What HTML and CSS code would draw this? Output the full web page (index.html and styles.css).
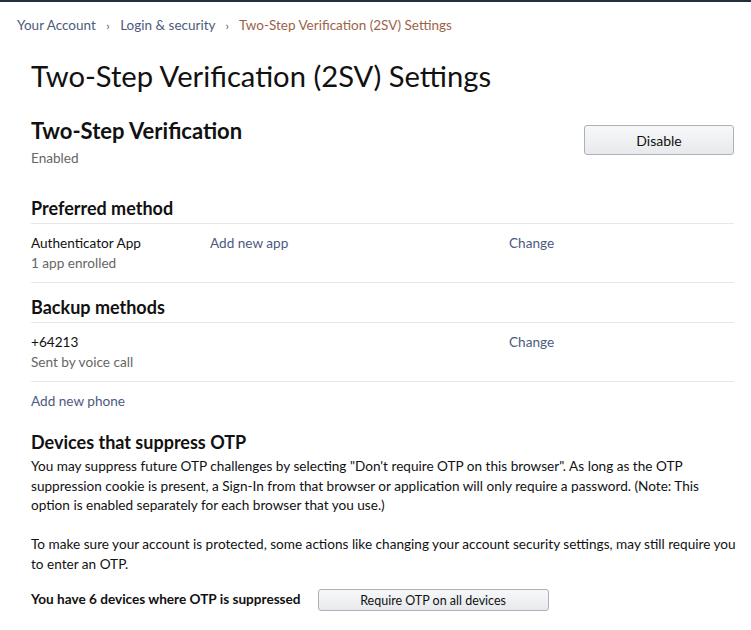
FILE: index.html
```html
<!DOCTYPE html>
<html lang="en">
<head>
    <meta charset="UTF-8">
    <title>Two-Step Verification (2SV) Settings</title>
    <link rel="stylesheet" href="styles.css">
</head>
<body>
    <div class="breadcrumb">
        <a href="#">Your Account</a>
        <span class="sep">›</span>
        <a href="#">Login &amp; security</a>
        <span class="sep">›</span>
        <span class="current">Two-Step Verification (2SV) Settings</span>
    </div>

    <div class="page">
        <h1>Two-Step Verification (2SV) Settings</h1>

        <div class="status">
            <div>
                <h2>Two-Step Verification</h2>
                <div class="muted">Enabled</div>
            </div>
            <button class="btn btn-wide">Disable</button>
        </div>

        <h3 class="section-title">Preferred method</h3>
        <div class="row">
            <div class="col-name">
                <div>Authenticator App</div>
                <div class="muted">1 app enrolled</div>
            </div>
            <div class="col-mid"><a href="#">Add new app</a></div>
            <div class="col-end"><a href="#">Change</a></div>
        </div>

        <h3 class="section-title">Backup methods</h3>
        <div class="row">
            <div class="col-name">
                <div>+64213</div>
                <div class="muted">Sent by voice call</div>
            </div>
            <div class="col-mid"></div>
            <div class="col-end"><a href="#">Change</a></div>
        </div>
        <div class="add-phone"><a href="#">Add new phone</a></div>

        <h3 class="otp-title">Devices that suppress OTP</h3>
        <p>You may suppress future OTP challenges by selecting "Don't require OTP on this browser". As long as the OTP suppression cookie is present, a Sign-In from that browser or application will only require a password. (Note: This option is enabled separately for each browser that you use.)</p>
        <p>To make sure your account is protected, some actions like changing your account security settings, may still require you to enter an OTP.</p>

        <div class="otp-row">
            <strong>You have 6 devices where OTP is suppressed</strong>
            <button class="btn btn-small">Require OTP on all devices</button>
        </div>
    </div>
</body>
</html>
```

FILE: styles.css
```css
body {
    margin: 0;
    border-top: 2px solid #232f3e;
    font-family: Lato, "Liberation Sans", sans-serif;
    font-size: 13.6px;
    line-height: 19.5px;
    color: #111;
    background: #fff;
}
a {
    color: #4d5a7e;
    text-decoration: none;
}
.breadcrumb {
    margin-top: 13px;
    padding-left: 17px;
    line-height: 20px;
    font-size: 13.5px;
}
.breadcrumb .sep {
    color: #555;
    margin: 0 7px;
    font-size: 12px;
}
.breadcrumb .current {
    color: #9b6448;
}
.page {
    padding: 0 17px 0 31px;
}
h1 {
    margin: 22px 0 0;
    font-size: 29.2px;
    line-height: 36px;
    font-weight: 400;
}
h2 {
    margin: 0;
    font-size: 22px;
    line-height: 26px;
    font-weight: 700;
}
.muted {
    color: #666;
}
.status {
    margin-top: 24px;
    display: flex;
    justify-content: space-between;
    align-items: flex-start;
}
.status .muted {
    margin-top: 4px;
    line-height: 20px;
}
.btn {
    font-family: inherit;
    color: #111;
    background: linear-gradient(to bottom, #f7f8fa, #e7e9ec);
    border: 1px solid #adb1b8;
    border-radius: 3px;
    cursor: pointer;
}
.btn-wide {
    margin-top: 7px;
    width: 150px;
    height: 30px;
    font-size: 14px;
}
.btn-small {
    width: 231px;
    height: 22px;
    font-size: 12.5px;
    padding: 0;
}
.section-title {
    margin: 28px 0 0;
    padding-bottom: 3px;
    font-size: 18px;
    line-height: 24px;
    border-bottom: 1px solid #e7e7e7;
}
.row + .section-title {
    margin-top: 12px;
}
.row {
    display: flex;
    padding: 10px 0 9px;
    border-bottom: 1px solid #e7e7e7;
}
.col-name {
    width: 179px;
}
.col-mid {
    width: 299px;
}
.add-phone {
    padding-top: 9px;
    line-height: 20px;
}
.otp-title {
    margin: 19px 0 3px;
    font-size: 18px;
    line-height: 24px;
}
p {
    margin: 0 -4px 19.5px 0;
}
p + p {
    margin-bottom: 0;
}
.otp-row {
    margin-top: 15px;
    display: flex;
    align-items: center;
    gap: 17px;
}
```
